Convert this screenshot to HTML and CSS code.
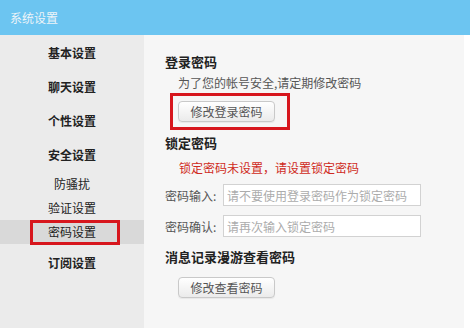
FILE: index.html
```html
<!DOCTYPE html>
<html>
<head>
  <title>系统设置</title>
  <link rel="stylesheet" href="styles.css">
</head>
<body>
  <header class="title-bar">系统设置</header>

  <div class="main">
    <ul class="side-nav">
      <li class="nav-item">基本设置</li>
      <li class="nav-item">聊天设置</li>
      <li class="nav-item">个性设置</li>
      <li class="nav-item">安全设置</li>
      <li class="sub-list">
        <div class="sub-item">防骚扰</div>
        <div class="sub-item">验证设置</div>
        <div class="sub-item active">密码设置</div>
      </li>
      <li class="nav-item">订阅设置</li>
    </ul>

    <div class="content">
      <div class="section-title">登录密码</div>
      <div class="desc">为了您的帐号安全,请定期修改密码</div>
      <div class="mark">
        <button class="button">修改登录密码</button>
      </div>

      <div class="section-title lock-title">锁定密码</div>
      <div class="warn">锁定密码未设置，请设置锁定密码</div>
      <div class="field">
        <label class="field-label">密码输入:</label>
        <input class="field-input" type="password" placeholder="请不要使用登录密码作为锁定密码">
      </div>
      <div class="field second">
        <label class="field-label">密码确认:</label>
        <input class="field-input" type="password" placeholder="请再次输入锁定密码">
      </div>

      <div class="section-title msg-title">消息记录漫游查看密码</div>
      <button class="button view-button">修改查看密码</button>
    </div>
  </div>
</body>
</html>
```

FILE: styles.css
```css
body {
  margin: 0;
  padding: 0;
  font-family: "Noto Sans CJK SC", "Noto Sans", sans-serif;
  font-size: 12px;
  background-color: #fff;
}

.title-bar {
  height: 35px;
  line-height: 35px;
  padding-left: 10px;
  background-color: #6cc5f1;
  color: #eef4f8;
  font-size: 12px;
}

.main {
  display: flex;
  height: 293px;
  width: 464px;
  background-color: #f6f6f6;
}

.side-nav {
  list-style: none;
  margin: 0;
  padding: 1px 0 0 0;
  width: 144px;
  background-color: #ebebeb;
  text-align: center;
  color: #222;
}

.nav-item {
  height: 34px;
  line-height: 34px;
  font-weight: bold;
}

.sub-list {
  padding-bottom: 2px;
}

.sub-item {
  height: 24px;
  line-height: 24px;
  position: relative;
}

.sub-item.active {
  background-color: #d9d9d9;
}

.sub-item.active::after {
  content: "";
  position: absolute;
  left: 30px;
  right: 24px;
  top: 0;
  bottom: -1px;
  border: 3px solid #d7161d;
}

.content {
  flex: 1;
  padding: 18px 0 0 21px;
  color: #222;
}

.section-title {
  font-size: 13px;
  font-weight: bold;
  line-height: 18px;
}

.desc {
  margin-top: 3px;
  padding-left: 13px;
  line-height: 18px;
  color: #555;
}

.mark {
  display: inline-block;
  margin: 1px 0 0 5px;
  padding: 5px 12px 5px 5px;
  border: 3px solid #d7161d;
}

.button {
  display: block;
  width: 97px;
  height: 21px;
  padding: 0;
  border: 1px solid #c9c9c9;
  border-radius: 4px;
  background: linear-gradient(#ffffff, #ebebeb);
  box-shadow: 0 1px 1px rgba(0, 0, 0, 0.06);
  color: #555;
  font-family: inherit;
  font-size: 12px;
  cursor: pointer;
}

.lock-title {
  margin-top: 4px;
}

.warn {
  margin-top: 7px;
  padding-left: 14px;
  line-height: 18px;
  color: #cf2a22;
}

.field {
  display: flex;
  align-items: center;
  margin-top: 7px;
}

.field.second {
  margin-top: 9px;
}

.field-label {
  width: 58px;
  color: #555;
}

.field-input {
  box-sizing: border-box;
  width: 198px;
  height: 22px;
  padding: 0 3px;
  border: 1px solid #d2d2d2;
  background-color: #fff;
  font-family: inherit;
  font-size: 12px;
  outline: none;
}

.field-input::placeholder {
  color: #acacac;
}

.msg-title {
  margin-top: 11px;
}

.view-button {
  margin: 11px 0 0 13px;
}
```
